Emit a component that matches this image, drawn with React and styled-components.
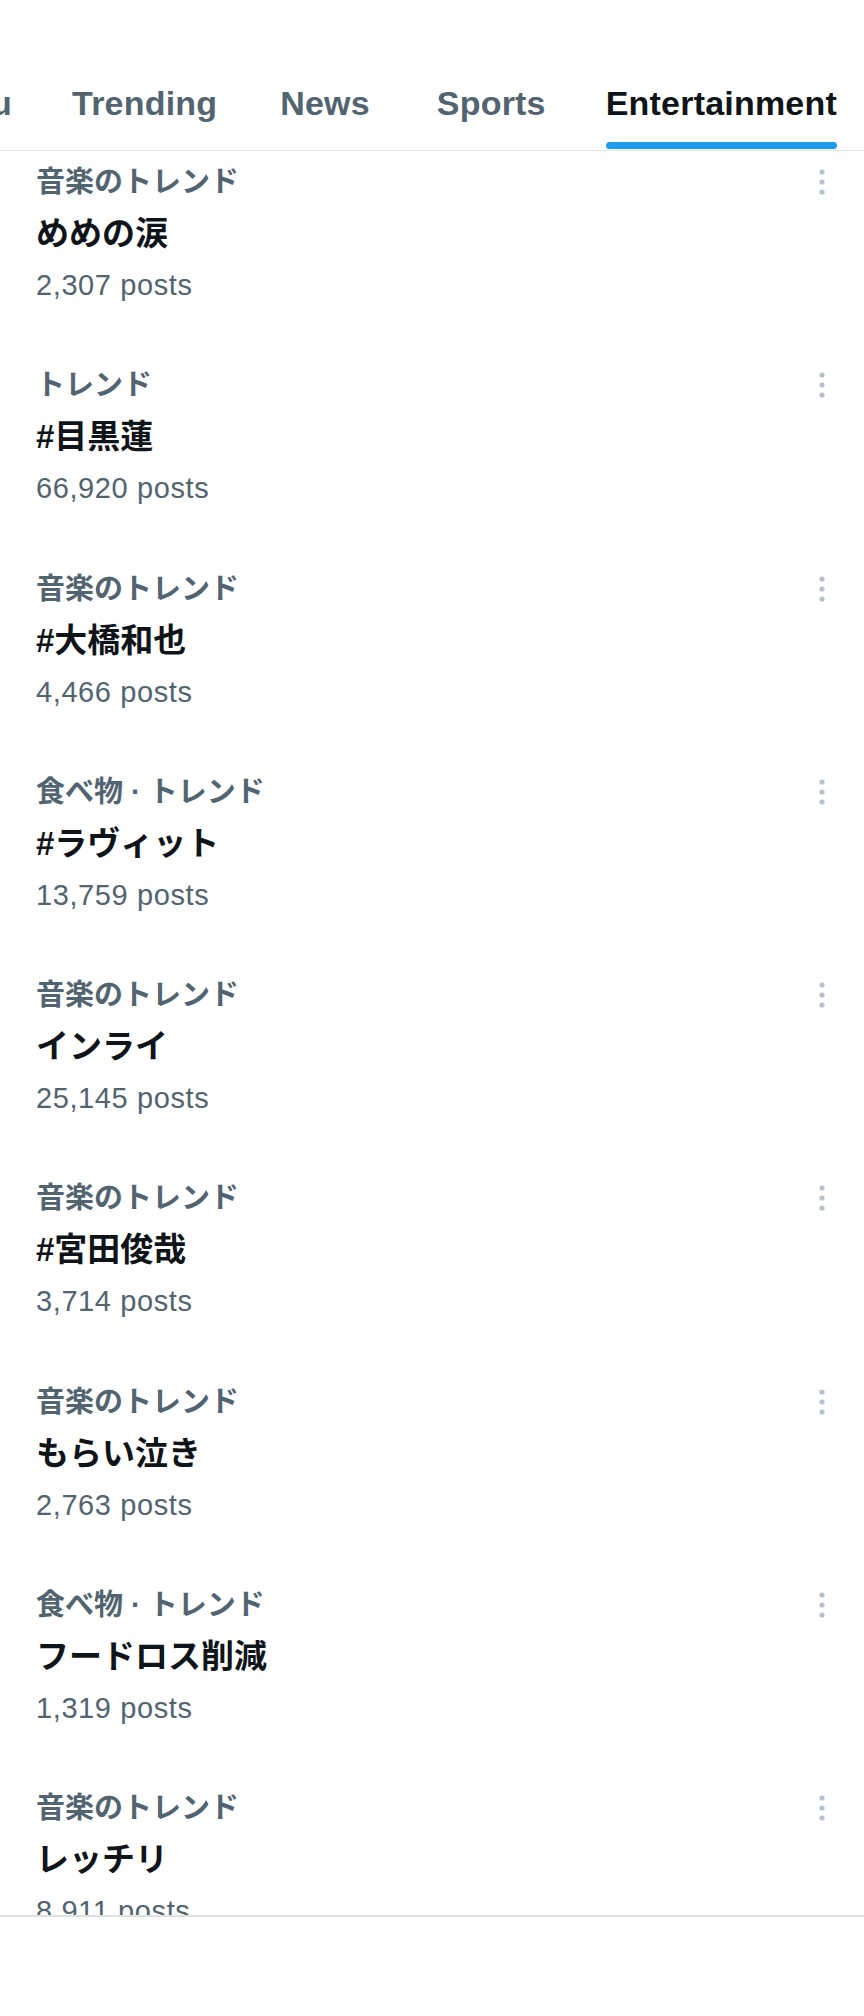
import React, { useLayoutEffect, useRef } from 'react'
import styled, { createGlobalStyle } from 'styled-components'

const GlobalStyle = createGlobalStyle`
  html, body {
    margin: 0;
    padding: 0;
    background: #ffffff;
  }
  body {
    font-family: "Liberation Sans", "Noto Sans CJK JP", sans-serif;
    -webkit-font-smoothing: antialiased;
  }
`

const tabs = ['For you', 'Trending', 'News', 'Sports', 'Entertainment']

const trends = [
  { category: '音楽のトレンド', name: 'めめの涙', posts: '2,307 posts' },
  { category: 'トレンド', name: '#目黒蓮', posts: '66,920 posts' },
  { category: '音楽のトレンド', name: '#大橋和也', posts: '4,466 posts' },
  { category: '食べ物 · トレンド', name: '#ラヴィット', posts: '13,759 posts' },
  { category: '音楽のトレンド', name: 'インライ', posts: '25,145 posts' },
  { category: '音楽のトレンド', name: '#宮田俊哉', posts: '3,714 posts' },
  { category: '音楽のトレンド', name: 'もらい泣き', posts: '2,763 posts' },
  { category: '食べ物 · トレンド', name: 'フードロス削減', posts: '1,319 posts' },
  { category: '音楽のトレンド', name: 'レッチリ', posts: '8,911 posts' },
]

function MoreIcon()
{
  return (
    <svg width="10" height="30" viewBox="0 0 10 30">
      <circle cx="5" cy="5" r="2.6" fill="#b4c2cc" />
      <circle cx="5" cy="15" r="2.6" fill="#b4c2cc" />
      <circle cx="5" cy="25" r="2.6" fill="#b4c2cc" />
    </svg>
  )
}

function App()
{
  const tabRef = useRef(null)

  useLayoutEffect(() => {
    // keep the active tab in view, like the scrolled strip in the app
    if (tabRef.current) {
      tabRef.current.scrollLeft = tabRef.current.scrollWidth
    }
  }, [])

  return (
    <>
      <GlobalStyle />
      <Page>
        <Header>
          <TabStrip ref={tabRef}>
            {tabs.map((t) => (
              <Tab key={t} active={t === 'Entertainment'}>
                <TabLabel active={t === 'Entertainment'}>{t}</TabLabel>
              </Tab>
            ))}
          </TabStrip>
        </Header>

        <TrendList>
          {trends.map((trend, i) => (
            <TrendItem key={i}>
              <TopRow>
                <Category>{trend.category}</Category>
                <MoreButton>
                  <MoreIcon />
                </MoreButton>
              </TopRow>
              <TrendName>{trend.name}</TrendName>
              <PostCount>{trend.posts}</PostCount>
            </TrendItem>
          ))}
        </TrendList>

        <BottomBar />
      </Page>
    </>
  )
}

const Page = styled.div`
  width: 864px;
  height: 2016px;
  display: flex;
  flex-direction: column;
  overflow: hidden;
  background: #ffffff;
`

const Header = styled.header`
  flex: 0 0 auto;
  padding-top: 56px;
  border-bottom: 1px solid #e1e8ed;
`

const TabStrip = styled.nav`
  display: flex;
  height: 94px;
  overflow-x: auto;
  scrollbar-width: none;
  &::-webkit-scrollbar {
    display: none;
  }
`

const Tab = styled.div`
  flex: 0 0 auto;
  display: flex;
  justify-content: center;
  padding: 0 30px;
  &:nth-child(2) {
    padding-right: 33px;
  }
  &:nth-child(3) {
    padding-right: 37px;
  }
  &:last-child {
    padding-right: 27px;
  }
`

const TabLabel = styled.span`
  position: relative;
  display: flex;
  align-items: center;
  height: 100%;
  font-family: "Liberation Sans", sans-serif;
  font-size: 34px;
  font-weight: 700;
  letter-spacing: 0.2px;
  color: ${(p) => (p.active ? '#0f1419' : '#536471')};

  &::after {
    content: '';
    display: ${(p) => (p.active ? 'block' : 'none')};
    position: absolute;
    left: 0;
    right: 0;
    bottom: 1px;
    height: 7px;
    border-radius: 4px;
    background: #1d9bf0;
  }
`

const TrendList = styled.section`
  flex: 0 0 1764px;
  overflow: hidden;
`

const TrendItem = styled.article`
  height: 203.25px;
  box-sizing: border-box;
  padding: 13px 36px 0 36px;
`

const TopRow = styled.div`
  display: flex;
  align-items: center;
  justify-content: space-between;
  height: 36px;
`

const Category = styled.div`
  font-family: "Liberation Sans", "Noto Sans CJK JP", sans-serif;
  font-size: 29px;
  line-height: 36px;
  font-weight: 600;
  color: #536471;
`

const MoreButton = styled.div`
  display: flex;
  align-items: center;
  justify-content: center;
  width: 20px;
  margin-right: -4px;
`

const TrendName = styled.div`
  margin-top: 12px;
  font-family: "Liberation Sans", "Noto Sans CJK JP", sans-serif;
  font-size: 33px;
  line-height: 44px;
  font-weight: 700;
  color: #0f1419;
`

const PostCount = styled.div`
  margin-top: 11px;
  font-family: "Liberation Sans", sans-serif;
  font-size: 29px;
  line-height: 36px;
  letter-spacing: 0.6px;
  color: #536471;
`

const BottomBar = styled.footer`
  flex: 1 1 auto;
  border-top: 2px solid #e0e0e0;
  background: #ffffff;
`

export default App
